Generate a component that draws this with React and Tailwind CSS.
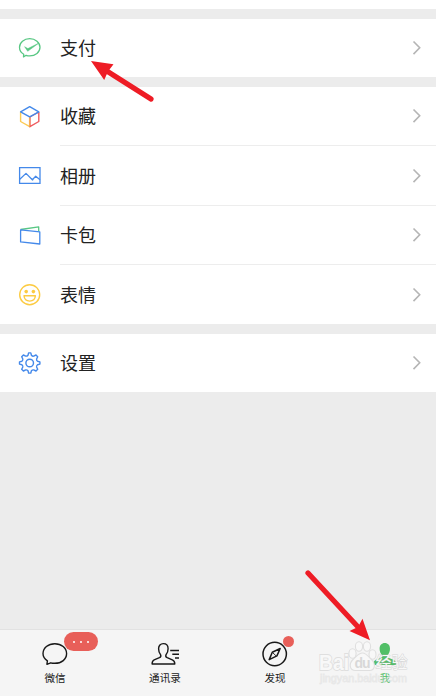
const TEXT_FONT = "font-['Noto_Sans_CJK_SC','Noto_Sans',sans-serif]"

function PayIcon() {
  return (
    <svg width="24" height="24" viewBox="0 0 24 24" fill="none" stroke="#58c783" strokeWidth="1.3" strokeLinejoin="round">
      <path d="M5.700 18.300C3 16.700 1.500 14.200 1.500 11.300C1.500 6.500 6 2.600 11.700 2.600S22 6.500 22 11.300S17.400 19.900 11.700 19.900C10.500 19.900 9.200 19.700 8.100 19.300L5.500 20.900Z" />
      <path d="M6.600 10.700L9.900 12.600L21 7L9.700 15.300Z" fill="#58c783" strokeWidth="0.500" />
    </svg>
  )
}

function FavoritesIcon() {
  return (
    <svg width="24" height="24" viewBox="0 0 24 24" fill="none" strokeWidth="1.4" strokeLinejoin="round">
      <path d="M2.600 7V16.500L11.700 21.700V12" stroke="#fccb54" />
      <path d="M20.800 7V16.500L11.900 21.700V12L20.800 7" stroke="#ef5a5e" />
      <path d="M11.400 12V21.500" stroke="#f7b955" strokeWidth="0.900" />
      <path d="M2.600 6.800L11.700 1.700L20.800 6.800L11.700 11.900Z" stroke="#4489ea" />
    </svg>
  )
}

function AlbumIcon() {
  return (
    <svg width="24" height="24" viewBox="0 0 24 24" fill="none" stroke="#4489ea" strokeWidth="1.3">
      <path d="M1.600 3.600H22V19.300H1.600Z" />
      <path d="M1.800 15.200L8 9.400L14.300 15.700L17.700 12.300L22 15.700M13.200 14.600L15.300 16.100" strokeLinejoin="round" />
    </svg>
  )
}

function CardsIcon() {
  return (
    <svg width="24" height="24" viewBox="0 0 24 24" fill="none" strokeWidth="1.3" strokeLinejoin="round">
      <path d="M2.600 5.500L20.700 2.900V7.500" stroke="#58c783" />
      <path d="M2.600 5.900L21.800 7.900V20L2.600 17.900Z" stroke="#4489ea" />
    </svg>
  )
}

function StickerIcon() {
  return (
    <svg width="24" height="24" viewBox="0 0 24 24" fill="none" stroke="#fccb42" strokeWidth="1.400">
      <circle cx="11.700" cy="11.700" r="10" />
      <circle cx="8.200" cy="8.600" r="1.800" fill="#fccb42" stroke="none" />
      <circle cx="15.400" cy="8.600" r="1.800" fill="#fccb42" stroke="none" />
      <path d="M6 12.800H17.400C17.100 16.200 14.900 18.100 11.700 18.100S6.300 16.200 6 12.800Z" strokeLinejoin="round" />
    </svg>
  )
}

function SettingsIcon() {
  return (
    <svg width="24" height="24" viewBox="0.300 0 24 24" fill="none" stroke="#4489ea" strokeWidth="1.400" strokeLinejoin="round">
      <circle cx="12" cy="12" r="3.800" />
      <path d="M10.300 4.200L10.900 1.900H13.100L13.700 4.200C14.500 5.100 15.300 5.300 16 5.100L18.300 4L20 5.700L18.900 8C18.700 8.900 19 9.700 19.800 10.300L22.200 10.900V13.100L19.800 13.700C19 14.400 18.700 15.200 18.900 16L20 18.300L18.300 20L16 18.900C15.200 18.700 14.400 19 13.700 19.800L13.100 22.100H10.900L10.300 19.800C9.600 19 8.800 18.700 8 18.900L5.700 20L4 18.300L5.100 16C5.300 15.200 5 14.400 4.200 13.700L1.800 13.100V10.900L4.200 10.300C5 9.600 5.300 8.800 5.100 8L4 5.700L5.700 4L8 5.100C8.800 5.300 9.600 5 10.300 4.200Z" />
    </svg>
  )
}

function ChatIcon() {
  return (
    <svg width="30" height="28" viewBox="0 0 30 28" fill="none" stroke="#181818" strokeWidth="1.400" strokeLinejoin="round">
      <path d="M7.400 20.800C4.600 19 3 16.500 3 13.600C3 7.900 8.200 3.700 14.800 3.700S26.600 7.900 26.600 13.600S21.600 23.300 14.800 23.300C13.300 23.300 12 23.200 10.700 22.800L6.900 24.300Z" />
    </svg>
  )
}

function ContactsIcon() {
  return (
    <svg width="30" height="28" viewBox="0 0 30 28" fill="none" stroke="#181818" strokeWidth="1.400" strokeLinejoin="round">
      <path d="M10.600 14.700C9.200 13 8.600 10.900 8.600 8.700C8.600 5.600 10.500 3.600 13.300 3.600S18.100 5.600 18.100 8.700C18.100 10.900 17.400 13 16 14.700C15.400 16 15.600 16.900 17.200 17.700L22.300 19.900C24 20.600 24.800 21.600 24.800 24H2.100C2.100 21.600 2.600 20.600 4.200 19.900L9.400 17.700C11 16.900 11.200 16 10.600 14.700Z" />
      <path d="M20.200 10.500H29M22.300 14.200H29M25 18H29" />
    </svg>
  )
}

function DiscoverIcon() {
  return (
    <svg width="30" height="28" viewBox="0 0 30 28" fill="none" stroke="#181818" strokeWidth="1.500" strokeLinejoin="round">
      <circle cx="14.700" cy="14" r="11.700" />
      <path d="M20.200 8.500L16.900 15.900L9.200 19.600L12.300 12.200Z" />
      <path d="M12.800 12.800L16 15.800" strokeWidth="0.900" />
    </svg>
  )
}

function MeIcon() {
  return (
    <svg width="30" height="28" viewBox="0 0 30 28" fill="#52bf67">
      <path d="M14.800 3C17.900 3 20 5.200 20 8.700C20 11.500 18.900 14 17 15.800C17 17 17.500 17.500 19 18L23.500 19.800C25.500 20.600 26 22 26 25H3.500C3.500 22 4 20.600 6 19.800L10.600 18C12 17.500 12.600 17 12.600 15.800C10.700 14 9.600 11.500 9.600 8.700C9.600 5.200 11.700 3 14.800 3Z" />
    </svg>
  )
}

const SECTIONS = [
  [{ label: '支付', Icon: PayIcon, height: 'h-[58px]' }],
  [
    { label: '收藏', Icon: FavoritesIcon, height: 'h-[59px]', divider: true },
    { label: '相册', Icon: AlbumIcon, height: 'h-[60px]', divider: true },
    { label: '卡包', Icon: CardsIcon, height: 'h-[59px]', divider: true },
    { label: '表情', Icon: StickerIcon, height: 'h-[59px]' },
  ],
  [{ label: '设置', Icon: SettingsIcon, height: 'h-[58px]' }],
]

const TABS = [
  { label: '微信', Icon: ChatIcon, badge: 'more' },
  { label: '通讯录', Icon: ContactsIcon },
  { label: '发现', Icon: DiscoverIcon, badge: 'dot' },
  { label: '我', Icon: MeIcon, active: true },
]

function MenuRow({ label, Icon, height, divider }) {
  return (
    <div className={`flex pl-[18px] ${height}`}>
      <div className="flex w-[42px] flex-none items-center">
        <Icon />
      </div>
      <div className={`flex flex-1 items-center justify-between pr-[14px] ${divider ? 'border-b border-[#ededed]' : ''}`}>
        <span className="pb-[2px] text-[18px] leading-[26px] text-[#222]">{label}</span>
        <svg width="10" height="16" viewBox="0 0 10 16" fill="none" stroke="#b5b5b5" strokeWidth="1.600">
          <path d="M1.500 1.500L7.700 7.800L1.500 14.100" />
        </svg>
      </div>
    </div>
  )
}

function Tab({ label, Icon, badge, active }) {
  return (
    <div className="relative flex w-[110px] flex-none flex-col items-center pt-[10px]">
      <Icon />
      <span className={`mt-[1px] text-[10.600px] leading-[17px] ${active ? 'text-[#52bf67]' : 'text-[#222]'}`}>{label}</span>
      {badge === 'more' && (
        <div className="absolute top-[2px] left-[64px] flex h-[19px] w-[34px] items-center justify-center gap-[5px] rounded-full bg-[#e85f59]">
          <i className="size-[2px] rounded-full bg-white" />
          <i className="size-[2px] rounded-full bg-white" />
          <i className="size-[2px] rounded-full bg-white" />
        </div>
      )}
      {badge === 'dot' && <div className="absolute top-[6px] left-[63px] size-[11px] rounded-full bg-[#e85f59]" />}
    </div>
  )
}

function Watermark() {
  return (
    <svg className="absolute top-[636px] left-[314px]" width="100" height="54" viewBox="0 0 100 54">
      <g fill="#f8f8f8" stroke="#dfdfdf" strokeWidth="1.100">
        <text x="5" y="34" fontSize="21.500" textLength="30" lengthAdjust="spacingAndGlyphs" fontWeight="bold" strokeWidth="1.800" paintOrder="stroke" fontFamily="'Liberation Sans', sans-serif">Bai</text>
        <ellipse cx="38.500" cy="17.500" rx="3.600" ry="4.800" />
        <ellipse cx="45" cy="10.500" rx="3.600" ry="4.700" />
        <ellipse cx="53" cy="10.500" rx="3.600" ry="4.700" />
        <ellipse cx="58.500" cy="18.500" rx="3.500" ry="4.800" />
        <path d="M48.500 17C52 17 54 20 57.500 23.500C62 28 61 34.500 55.500 34.500H41.500C35.500 34.500 34.500 28 39 23.500C43 20 44.500 17 48.500 17Z" />
      </g>
      <text x="40.500" y="32" fontSize="14" textLength="16" fontWeight="bold" fill="#d8d8d8" fontFamily="'Liberation Sans', sans-serif">du</text>
      <text x="61.500" y="32" fontSize="16" textLength="32" fill="#f8f8f8" stroke="#b4b4b4" strokeOpacity="0.500" strokeWidth="1" paintOrder="stroke" fontFamily="'Noto Sans CJK SC', sans-serif">经验</text>
      <text x="6" y="46" fontSize="10.500" textLength="87" lengthAdjust="spacingAndGlyphs" fill="#f8f8f8" fillOpacity="0.300" stroke="#d4d4d4" strokeOpacity="0.400" strokeWidth="0.800" fontFamily="'Liberation Sans', sans-serif">jingyan.baidu.com</text>
    </svg>
  )
}

function Pointers() {
  return (
    <svg className="pointer-events-none absolute inset-0" width="436" height="696" viewBox="0 0 436 696" fill="#ee1c25">
      <path d="M106 70.500L151 99M308 573L359 628" stroke="#ee1c25" strokeWidth="5.200" strokeLinecap="round" />
      <path d="M91 61L113.500 64.200L108 71.500L104.200 80Z" />
      <path d="M370 640.300L362.500 618.700L358 627L349.500 631Z" />
    </svg>
  )
}

export default function App() {
  return (
    <div className={`relative flex h-[696px] w-[436px] flex-col overflow-hidden bg-[#ececec] ${TEXT_FONT}`}>
      <div className="h-[9px] flex-none bg-white" />
      <main className="mt-[10px] flex flex-1 flex-col gap-[10px]">
        {SECTIONS.map((rows) => (
          <section key={rows[0].label} className="bg-white">
            {rows.map((row) => (
              <MenuRow key={row.label} {...row} />
            ))}
          </section>
        ))}
      </main>
      <nav className="flex h-[67px] flex-none border-t border-[#e2e2e2] bg-[#f5f5f5]">
        {TABS.map((tab) => (
          <Tab key={tab.label} {...tab} />
        ))}
      </nav>
      <Watermark />
      <Pointers />
    </div>
  )
}
